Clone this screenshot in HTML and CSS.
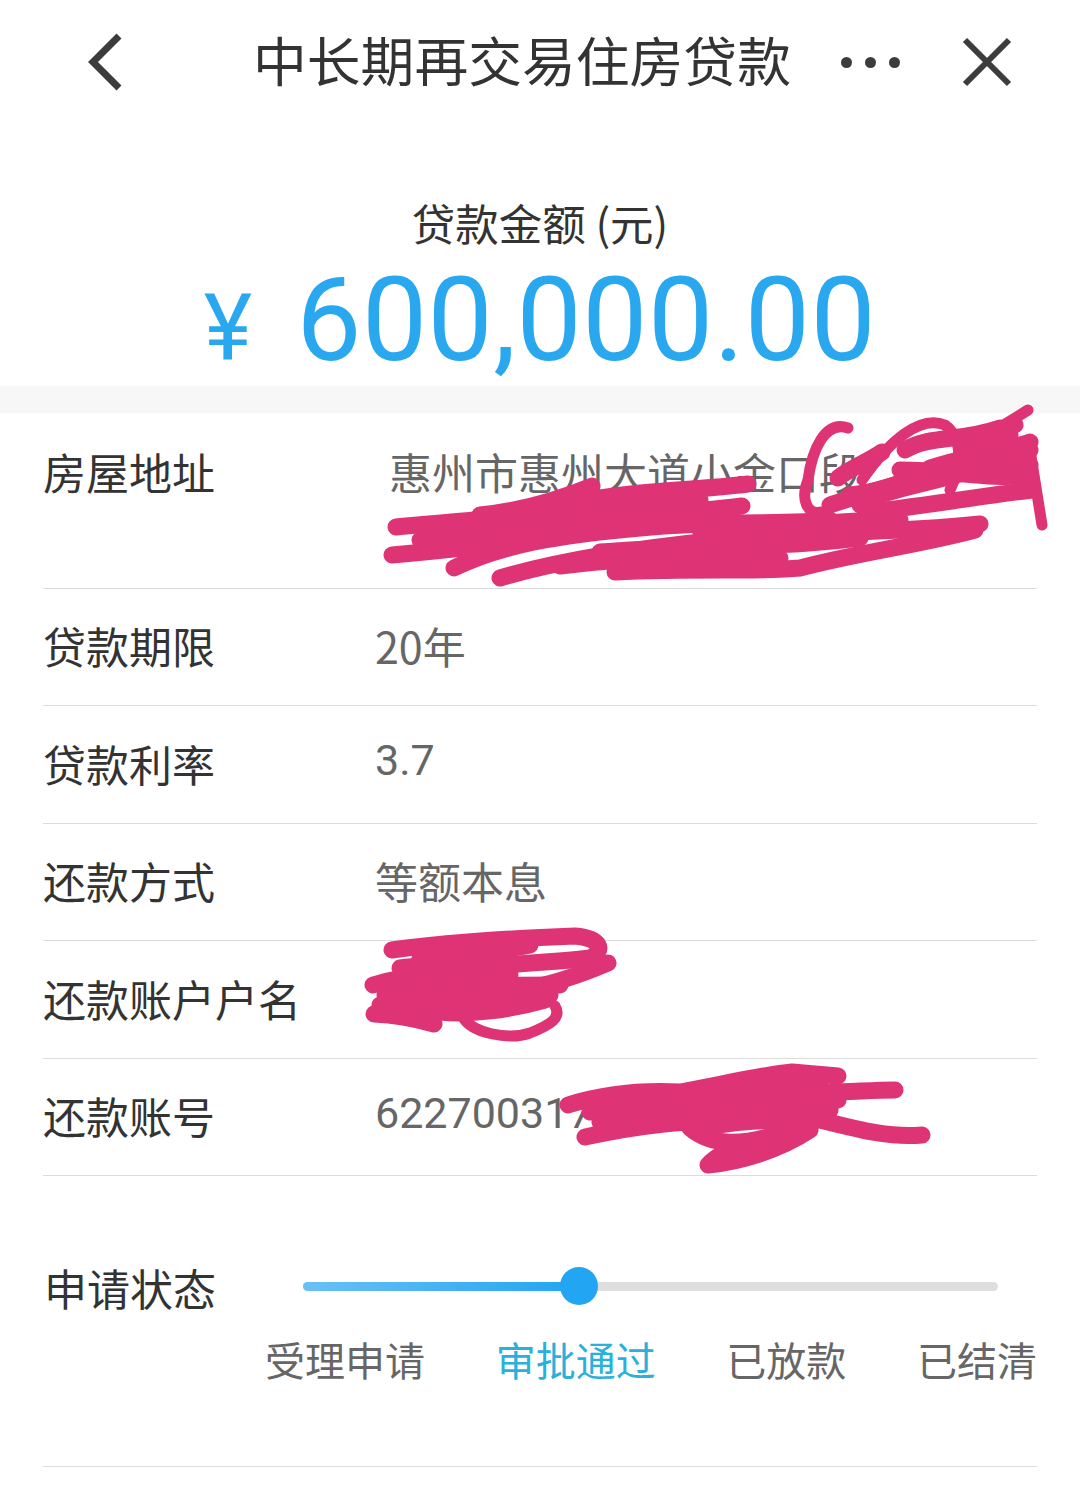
FILE: index.html
```html
<!DOCTYPE html>
<html lang="zh-CN">
<head>
    <meta charset="utf-8">
    <title>中长期再交易住房贷款</title>
    <link rel="stylesheet" href="styles.css">
</head>
<body>
<div class="page">
    <div class="top-bar">
        <svg class="back-icon" width="40" height="60" viewBox="0 0 40 60"><path d="M35 4 L9 30 L35 56"/></svg>
        <div class="title">中长期再交易住房贷款</div>
        <div class="more-dots"><i></i><i></i><i></i></div>
        <svg class="close-icon" width="50" height="50" viewBox="0 0 50 50"><path d="M3 3 L47 47 M47 3 L3 47"/></svg>
    </div>

    <div class="amount-box">
        <div class="amount-label">贷款金额 (元)</div>
        <div class="amount"><span class="yen">¥</span><span>600,000.00</span></div>
    </div>

    <div class="band"></div>

    <div class="rows">
        <div class="row row-address">
            <div class="row-label">房屋地址</div>
            <div class="row-value address">惠州市惠州大道小金口段</div>
        </div>
        <div class="row">
            <div class="row-label">贷款期限</div>
            <div class="row-value">20年</div>
        </div>
        <div class="row">
            <div class="row-label">贷款利率</div>
            <div class="row-value num">3.7</div>
        </div>
        <div class="row">
            <div class="row-label">还款方式</div>
            <div class="row-value">等额本息</div>
        </div>
        <div class="row">
            <div class="row-label">还款账户户名</div>
            <div class="row-value"></div>
        </div>
        <div class="row">
            <div class="row-label">还款账号</div>
            <div class="row-value num">622700317</div>
        </div>
    </div>

    <div class="status">
        <div class="status-top">
            <div class="status-label">申请状态</div>
            <div class="track">
                <div class="track-fill"></div>
                <div class="knob"></div>
            </div>
        </div>
        <div class="steps">
            <span>受理申请</span>
            <span class="active">审批通过</span>
            <span>已放款</span>
            <span>已结清</span>
        </div>
    </div>

    <div class="bottom-line"></div>

    <!-- hand drawn scribbles over the private details -->
    <svg class="scribble" width="1080" height="1491" viewBox="0 0 1080 1491">
        <path d="M396 527 C470 520 560 515 600 498 C650 490 700 490 748 484"/>
        <path d="M480 515 C530 510 570 495 592 486"/>
        <path d="M392 555 C470 548 540 540 600 525 C660 510 700 512 742 506"/>
        <path d="M420 540 C520 532 620 530 720 518"/>
        <path d="M440 530 C520 522 600 512 700 500"/>
        <path d="M454 568 C500 545 560 535 640 528 C720 520 790 525 830 520"/>
        <path d="M500 578 C560 560 640 548 720 540 C800 530 880 535 980 524"/>
        <path d="M615 572 C700 568 760 572 800 568 C860 552 920 545 975 530"/>
        <path d="M600 552 C680 545 760 550 860 538"/>
        <path d="M560 566 C640 556 700 556 780 558"/>
        <path d="M700 530 C760 528 840 520 900 520"/>
        <path class="thin" d="M848 428 C825 420 812 450 808 480 C800 500 808 515 820 512"/>
        <path class="thin" d="M862 480 C890 440 920 415 945 425 C965 440 960 470 950 490"/>
        <path class="thin" d="M1028 410 C1000 428 985 435 965 450 C945 470 925 480 900 490"/>
        <path d="M860 505 C900 480 960 450 1030 465"/>
        <path d="M850 495 C900 490 970 455 1010 435"/>
        <path d="M870 512 C930 505 990 495 1032 490"/>
        <path d="M900 470 C950 470 990 480 1030 475"/>
        <path d="M880 495 C930 480 990 470 1030 450"/>
        <path d="M965 445 C985 440 1000 430 1015 425"/>
        <path d="M838 478 C850 468 868 462 882 452"/>
        <path d="M905 450 C930 435 960 442 1000 428"/>
        <path d="M930 468 C960 458 1000 452 1030 442"/>
        <path d="M830 505 C850 498 880 490 910 480"/>
        <path class="thin" d="M1030 450 L1042 525"/>

        <path d="M392 950 C450 942 520 938 575 936 C600 938 606 950 590 958 C560 962 530 962 500 966"/>
        <path d="M608 963 C580 975 550 985 520 990 L470 990"/>
        <path d="M420 958 C470 950 500 952 530 945"/>
        <path d="M400 968 C440 962 480 966 510 962"/>
        <path d="M373 985 C420 970 470 975 510 975"/>
        <path d="M385 995 C430 985 500 985 560 985"/>
        <path d="M380 1005 C430 1000 500 1000 550 995"/>
        <path d="M374 1014 C400 1015 420 1020 434 1024"/>
        <path d="M400 1010 C440 1012 470 1010 500 1004"/>
        <path d="M440 1012 C470 1015 510 1010 545 1000"/>
        <path class="thin" d="M462 1015 C470 1034 510 1040 530 1033 C550 1025 562 1018 555 1006"/>

        <path d="M568 1105 C600 1095 640 1090 680 1092 C720 1085 760 1075 792 1072 L838 1076"/>
        <path d="M590 1112 C660 1100 740 1095 790 1090 C830 1095 860 1090 895 1090"/>
        <path d="M585 1137 C640 1125 690 1120 720 1122 C760 1110 800 1105 838 1100"/>
        <path d="M600 1122 C660 1112 720 1108 800 1098"/>
        <path d="M680 1105 C720 1100 780 1085 820 1082"/>
        <path d="M730 1110 C760 1102 800 1100 830 1110"/>
        <path d="M700 1130 C730 1120 770 1120 820 1120 C860 1130 890 1138 922 1135"/>
        <path d="M690 1128 C710 1145 740 1148 790 1130"/>
        <path d="M708 1165 C740 1162 780 1150 810 1130 M708 1165 C720 1152 735 1150 745 1145"/>
    </svg>
</div>
</body>
</html>
```

FILE: styles.css
```css
body {
    margin: 0;
    background-color: #fff;
    font-family: "Noto Sans CJK SC", sans-serif;
}

.page {
    width: 1080px;
    height: 1491px;
    position: relative;
    overflow: hidden;
}

.top-bar {
    height: 124px;
    display: flex;
    align-items: center;
    padding-left: 84px;
}

.back-icon path {
    fill: none;
    stroke: #3c3c3c;
    stroke-width: 7;
}

.close-icon path {
    fill: none;
    stroke: #3c3c3c;
    stroke-width: 6;
}

.back-icon {
    margin-right: 129px;
}

.title {
    font-size: 53.8px;
    color: #333;
    white-space: nowrap;
    padding-bottom: 8px;
}

.more-dots {
    display: flex;
    gap: 13px;
    margin-left: 50px;
    margin-right: 62px;
}

.more-dots i {
    width: 11px;
    height: 11px;
    border-radius: 50%;
    background-color: #3c3c3c;
}

.amount-box {
    height: 262px;
    display: flex;
    flex-direction: column;
    align-items: center;
}

.amount-label {
    margin-top: 69px;
    font-size: 43.5px;
    line-height: 60px;
    color: #333;
}

.amount {
    display: flex;
    align-items: baseline;
    gap: 44px;
    margin-top: 3px;
    font-family: "Roboto", sans-serif;
    font-size: 116px;
    letter-spacing: 0.5px;
    line-height: 128px;
    color: #2aa8ef;
}

.yen {
    font-size: 92px;
    letter-spacing: 0;
}

.band {
    height: 27px;
    background-color: #f7f7f7;
}

.rows {
    margin: 0 43px;
}

.row {
    height: 116.5px;
    border-bottom: 1px solid #dcdcdc;
    display: flex;
    align-items: center;
    font-size: 43px;
}

.row-address {
    height: 174.6px;
    align-items: flex-start;
}

.row-address .row-label,
.row-address .row-value {
    margin-top: 27px;
}

.row-label {
    width: 332px;
    color: #333;
    flex-shrink: 0;
    padding-bottom: 3px;
}

.row-value {
    color: #666;
    padding-bottom: 3px;
}

.row-value.num {
    font-family: "Roboto", sans-serif;
    padding-bottom: 8px;
}

.address {
    margin-left: 14px;
}

.status {
    padding: 0 43px 0 44px;
}

.status-top {
    display: flex;
    align-items: center;
    margin-top: 80px;
}

.status-label {
    font-size: 43px;
    color: #333;
    width: 259px;
}

.track {
    flex: 1;
    height: 9px;
    margin-right: 39px;
    margin-bottom: 2px;
    border-radius: 5px;
    background-color: #dedede;
    position: relative;
}

.track-fill {
    width: 276px;
    height: 100%;
    border-radius: 5px;
    background: linear-gradient(to right, #6ac0f6, #22a5f0);
}

.knob {
    position: absolute;
    left: 257px;
    top: -15px;
    width: 38px;
    height: 38px;
    border-radius: 50%;
    background-color: #22a5f3;
}

.steps {
    display: flex;
    justify-content: space-between;
    margin-top: 12px;
    padding-left: 221px;
    font-size: 40px;
    line-height: 58px;
    color: #666;
}

.steps .active {
    color: #2ab0dc;
}

.bottom-line {
    height: 1px;
    margin: 78px 43px 0;
    background-color: #dcdcdc;
}

.scribble {
    position: absolute;
    top: 0;
    left: 0;
}

.scribble path {
    fill: none;
    stroke: #de3375;
    stroke-width: 17;
    stroke-linecap: round;
    stroke-linejoin: round;
}

.scribble path.thin {
    stroke-width: 11;
}
```
